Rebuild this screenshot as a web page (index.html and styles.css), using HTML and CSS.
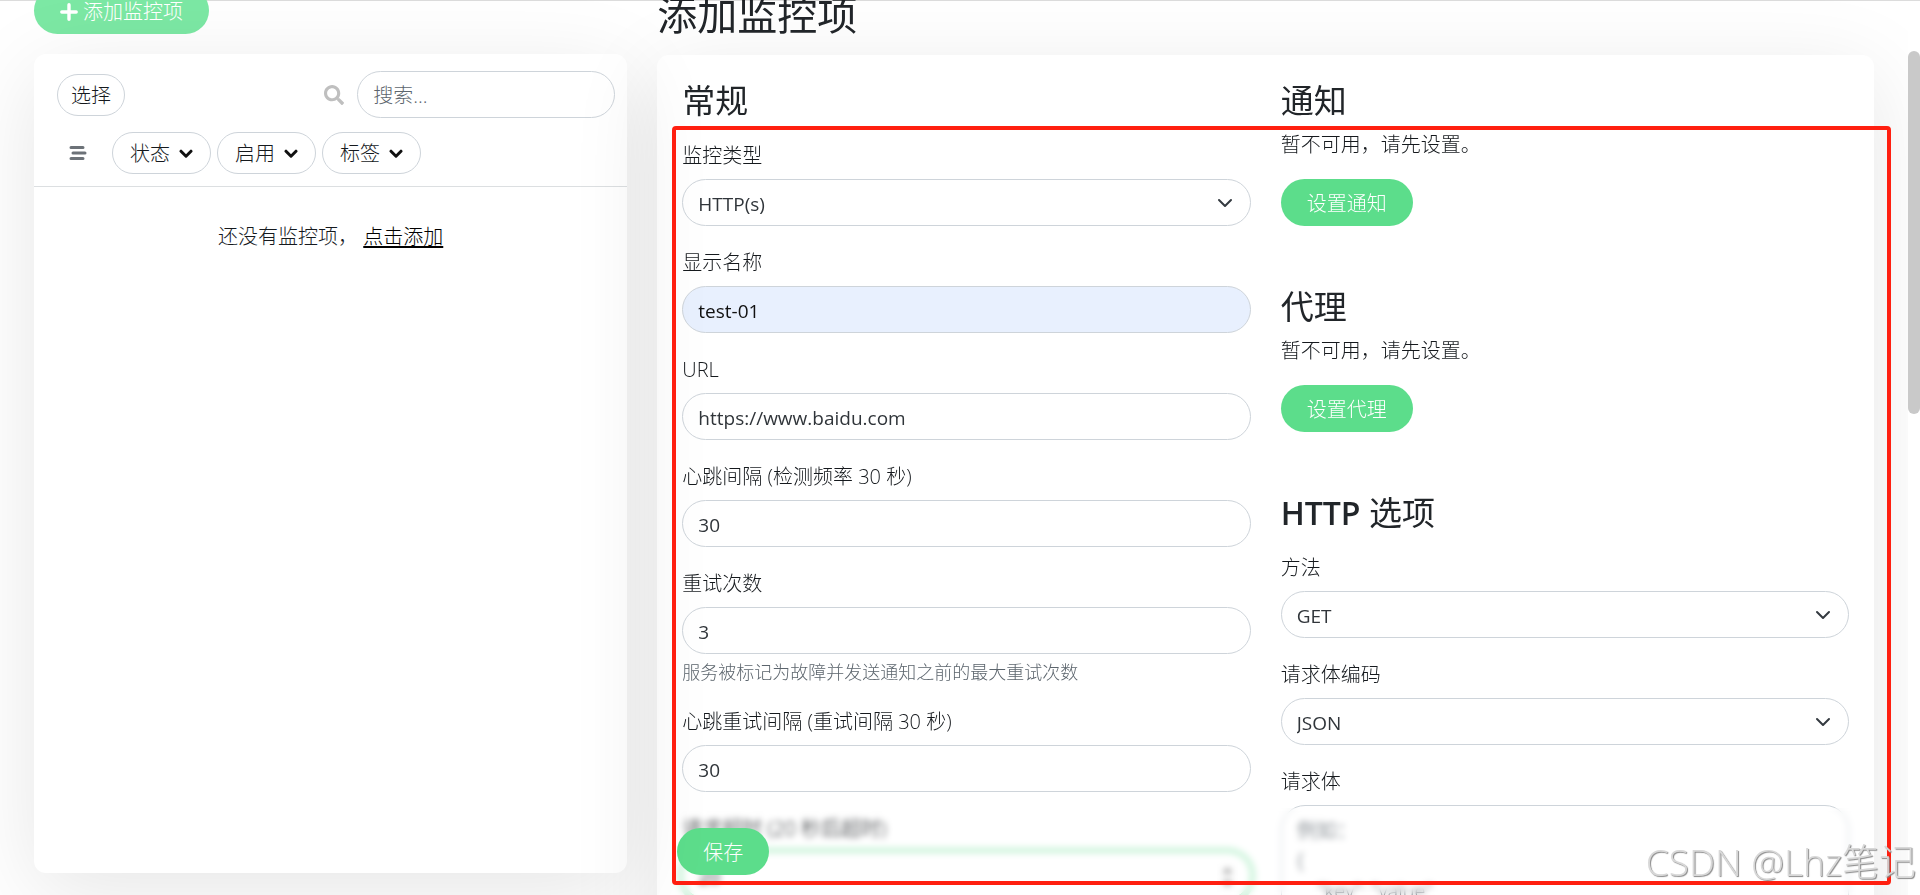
FILE: index.html
```html
<!DOCTYPE html>
<html lang="zh-CN">
<head>
<meta charset="utf-8">
<title>添加监控项</title>
<link rel="stylesheet" href="styles.css">
</head>
<body>
<div class="page">
  <aside class="sidebar">
    <button class="btn btn-add" type="button">
      <svg class="icon-plus" viewBox="0 0 18 18" aria-hidden="true"><path d="M9 1.8v14.4M1.8 9h14.4" stroke="currentColor" stroke-width="3.4" stroke-linecap="round"/></svg>
      添加监控项
    </button>
    <section class="card list-card">
      <header class="list-header">
        <div class="row">
          <button class="pill pill-select" type="button">选择</button>
          <div class="search">
            <svg class="icon-search" viewBox="0 0 512 512" aria-hidden="true"><path fill="currentColor" d="M505 442.700 405.300 343c-4.500-4.500-10.600-7-17-7H372c27.600-35.300 44-79.700 44-128C416 93.100 322.900 0 208 0S0 93.100 0 208s93.100 208 208 208c48.300 0 92.700-16.400 128-44v16.300c0 6.400 2.500 12.500 7 17l99.700 99.700c9.400 9.400 24.600 9.400 33.900 0l28.300-28.300c9.400-9.400 9.400-24.600.1-34zM208 336c-70.700 0-128-57.200-128-128 0-70.700 57.200-128 128-128 70.700 0 128 57.200 128 128 0 70.700-57.200 128-128 128z"/></svg>
            <input class="control" type="search" placeholder="搜索..." aria-label="搜索">
          </div>
        </div>
        <div class="row filters">
          <button class="icon-button" type="button" aria-label="列表">
            <svg class="icon-bars" viewBox="0 0 18 16" aria-hidden="true"><path d="M2 2.500h12M4 8h12M2 13.500h12" stroke="currentColor" stroke-width="3" stroke-linecap="round"/></svg>
          </button>
          <button class="pill" type="button">状态 <svg class="icon-chevron" viewBox="0 0 14 10" aria-hidden="true"><path d="M2 2.200l5 5 5-5"/></svg></button>
          <button class="pill" type="button">启用 <svg class="icon-chevron" viewBox="0 0 14 10" aria-hidden="true"><path d="M2 2.200l5 5 5-5"/></svg></button>
          <button class="pill" type="button">标签 <svg class="icon-chevron" viewBox="0 0 14 10" aria-hidden="true"><path d="M2 2.200l5 5 5-5"/></svg></button>
        </div>
      </header>
      <p class="empty">还没有监控项， <a href="#add">点击添加</a></p>
    </section>
  </aside>

  <main class="content">
    <h1 class="title">添加监控项</h1>
    <form class="card form-card">
      <div class="columns">
        <div class="column">
          <h2 class="heading">常规</h2>
          <div class="field">
            <label for="type">监控类型</label>
            <select class="control" id="type"><option>HTTP(s)</option></select>
          </div>
          <div class="field">
            <label for="name">显示名称</label>
            <input class="control autofilled" id="name" type="text" value="test-01">
          </div>
          <div class="field">
            <label for="url">URL</label>
            <input class="control" id="url" type="url" value="https://www.baidu.com">
          </div>
          <div class="field">
            <label for="interval">心跳间隔 (检测频率 30 秒)</label>
            <input class="control" id="interval" type="number" value="30">
          </div>
          <div class="field">
            <label for="retries">重试次数</label>
            <input class="control" id="retries" type="number" value="3">
            <p class="help">服务被标记为故障并发送通知之前的最大重试次数</p>
          </div>
          <div class="field">
            <label for="retry-interval">心跳重试间隔 (重试间隔 30 秒)</label>
            <input class="control" id="retry-interval" type="number" value="30">
          </div>
          <div class="field">
            <label for="timeout">请求超时 (20 秒后超时)</label>
            <input class="control active" id="timeout" type="number" value="20">
          </div>
        </div>
        <div class="column">
          <section class="group">
            <h2 class="heading">通知</h2>
            <p class="note">暂不可用，请先设置。</p>
            <button class="btn" type="button">设置通知</button>
          </section>
          <section class="group">
            <h2 class="heading">代理</h2>
            <p class="note">暂不可用，请先设置。</p>
            <button class="btn" type="button">设置代理</button>
          </section>
          <section class="group">
            <h2 class="heading"><span class="latin">HTTP</span> 选项</h2>
            <div class="field">
              <label for="method">方法</label>
              <select class="control" id="method"><option>GET</option></select>
            </div>
            <div class="field">
              <label for="encoding">请求体编码</label>
              <select class="control" id="encoding"><option>JSON</option></select>
            </div>
            <div class="field">
              <label for="body">请求体</label>
              <textarea class="control" id="body" placeholder="例如：&#10;{&#10;    &quot;key&quot;: &quot;value&quot;&#10;}"></textarea>
            </div>
          </section>
        </div>
      </div>
      <div class="save-bar"><button class="btn btn-save" type="submit">保存</button></div>
    </form>
  </main>
</div>
<div class="scrollbar"><div class="thumb"></div></div>
<div class="marker"></div>
<div class="watermark">CSDN @Lhz笔记</div>
</body>
</html>
```
FILE: styles.css
```css
* { box-sizing: border-box; }
body {
  margin: 0;
  height: 100vh;
  overflow: hidden;
  background: #fff;
  color: #15191d;
  font: 300 20px/30px "Open Sans", "Noto Sans CJK SC", sans-serif;
}
h1, h2, p { margin: 0; }
h1, h2 { color: #212529; font-weight: 400; }
button, input, select, textarea { font: inherit; color: inherit; }

.page {
  display: grid;
  grid-template-columns: repeat(12, minmax(0, 1fr));
  gap: 30px;
  align-items: start;
  padding: 0 46px 0 34px;
  border-top: 1px solid #dcdcdc;
}
.sidebar { grid-column: span 4; margin-top: -14px; }
.content { grid-column: span 8; margin-top: -10px; mix-blend-mode: multiply; }
.card { border-radius: 12px; background: #fff; box-shadow: 0 19px 88px rgba(0, 0, 0, .1); }

.btn {
  height: 47px;
  padding: 2px 26px 0;
  border: 0;
  border-radius: 24px;
  background: #5cdd8b;
  color: #fff;
}
.btn-add { display: flex; align-items: center; gap: 5px; background: #7ce8a4; }
.icon-plus { width: 18px; height: 18px; }

.list-card { margin-top: 20px; height: calc(100vh - 76px); }
.list-header { padding: 17px 12px 12px 23px; border-bottom: 1px solid #dcdfe1; }
.row { display: flex; align-items: center; justify-content: space-between; }
.pill {
  display: flex;
  align-items: center;
  gap: 9px;
  height: 42px;
  padding: 2px 17px 0;
  border: 1px solid #ced4da;
  border-radius: 21px;
  background: transparent;
}
.pill-select { padding: 2px 13px 0; }
.search { display: flex; align-items: center; gap: 13px; }
.search .control { width: 258px; }
.icon-search { width: 20px; height: 20px; color: #bfbfbf; }
.filters { justify-content: flex-start; gap: 6px; margin-top: 14px; }
.icon-button { display: flex; width: 49px; padding: 0 0 0 12px; border: 0; background: none; color: #6c7278; }
.icon-bars { flex: none; width: 18px; height: 16px; }
.icon-chevron { width: 14px; height: 10px; fill: none; stroke: #111; stroke-width: 3; stroke-linecap: round; stroke-linejoin: round; }
.empty { margin-top: 35px; text-align: center; }
.empty a { color: #000; text-underline-offset: 2px; }

.title { font-size: 40px; line-height: 48px; }
.form-card { margin-top: 16px; padding-top: 27px; }
.columns { display: grid; grid-template-columns: 1fr 1fr; gap: 30px; padding: 0 25px; }
.heading { margin-bottom: 21px; font-size: 33px; line-height: 38px; }
.latin { font-weight: 600; font-size: 32px; }
.field { display: flex; flex-direction: column; margin-bottom: 22px; }
.field label { margin-bottom: 8px; }
.control {
  width: 100%;
  height: 47px;
  padding: 2px 15px 0;
  border: 1px solid #ced4da;
  border-radius: 24px;
  outline: 0;
  background: #fff;
  color: #30353a;
  font-size: 19px;
  font-weight: 400;
  appearance: none;
}
.control::placeholder { color: #5c656d; opacity: 1; font-size: 20px; font-weight: 300; }
select.control {
  background: url("data:image/svg+xml,%3Csvg xmlns='http://www.w3.org/2000/svg' viewBox='0 0 16 16'%3E%3Cpath fill='none' stroke='%23343a40' stroke-linecap='round' stroke-linejoin='round' stroke-width='2' d='m2 5 6 6 6-6'/%3E%3C/svg%3E") no-repeat right 17px center / 16px 16px;
}
textarea.control { height: 180px; padding-top: 10px; line-height: 30px; resize: none; }
.autofilled { background: #e8f0fe; color: #111; }
.control::-webkit-inner-spin-button { opacity: 0; }
.active { border-color: #aeeec5; box-shadow: 0 0 0 5px rgba(92, 221, 139, .25); }
.active::-webkit-inner-spin-button { opacity: 1; }
.help { margin-top: 5px; margin-bottom: -1px; color: #5c656d; font-size: 18px; line-height: 27px; }
.group { margin-bottom: 62px; }
.note { margin: -11px 0 19px; }
.group .note + .btn { display: block; }

.save-bar { position: sticky; bottom: 0; padding: 20px; backdrop-filter: blur(3px); }
.btn-save { display: block; }

.scrollbar { position: fixed; top: 1px; right: 0; bottom: 0; width: 12px; padding-top: 50px; background: #fff; }
.thumb { height: 363px; border-radius: 6px; background: #c9c9c9; }
.marker { position: fixed; top: 126px; right: 29px; bottom: 10px; left: 672px; border: 4px solid #ff1f10; border-radius: 4px; }
.watermark { position: fixed; right: 4px; bottom: 10px; color: #d8d8d8; font-size: 37px; line-height: 46px; text-shadow: 1px 1px 1px #888; }
```
